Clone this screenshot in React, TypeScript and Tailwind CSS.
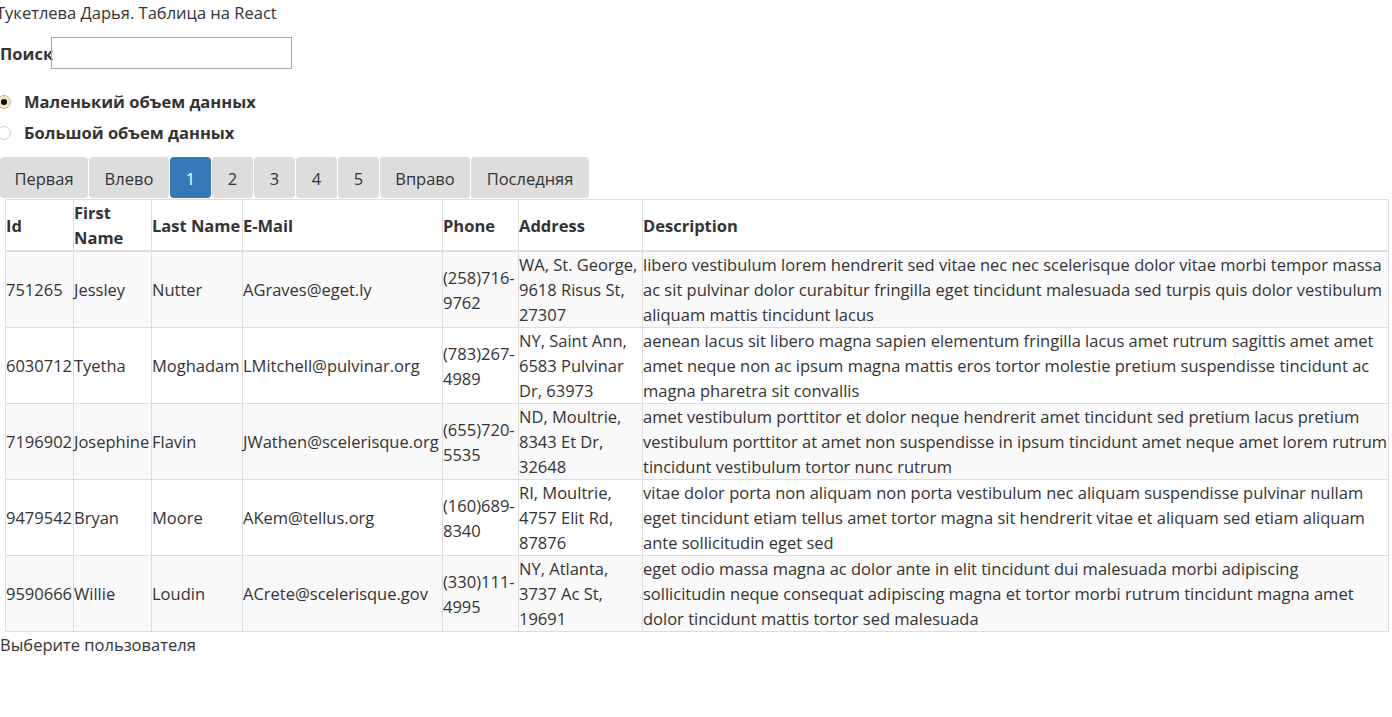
import React from "react";

type RowT = {
  id: string;
  first: string;
  last: string;
  email: string;
  phone: string;
  address: string;
  description: string[];
};

// строки описания разбиты так же, как в макете
const rows: RowT[] = [
  {
    id: "751265",
    first: "Jessley",
    last: "Nutter",
    email: "AGraves@eget.ly",
    phone: "(258)716-9762",
    address: "WA, St. George, 9618 Risus St, 27307",
    description: [
      "libero vestibulum lorem hendrerit sed vitae nec nec scelerisque dolor vitae morbi tempor massa",
      "ac sit pulvinar dolor curabitur fringilla eget tincidunt malesuada sed turpis quis dolor vestibulum",
      "aliquam mattis tincidunt lacus",
    ],
  },
  {
    id: "6030712",
    first: "Tyetha",
    last: "Moghadam",
    email: "LMitchell@pulvinar.org",
    phone: "(783)267-4989",
    address: "NY, Saint Ann, 6583 Pulvinar Dr, 63973",
    description: [
      "aenean lacus sit libero magna sapien elementum fringilla lacus amet rutrum sagittis amet amet",
      "amet neque non ac ipsum magna mattis eros tortor molestie pretium suspendisse tincidunt ac",
      "magna pharetra sit convallis",
    ],
  },
  {
    id: "7196902",
    first: "Josephine",
    last: "Flavin",
    email: "JWathen@scelerisque.org",
    phone: "(655)720-5535",
    address: "ND, Moultrie, 8343 Et Dr, 32648",
    description: [
      "amet vestibulum porttitor et dolor neque hendrerit amet tincidunt sed pretium lacus pretium",
      "vestibulum porttitor at amet non suspendisse in ipsum tincidunt amet neque amet lorem rutrum",
      "tincidunt vestibulum tortor nunc rutrum",
    ],
  },
  {
    id: "9479542",
    first: "Bryan",
    last: "Moore",
    email: "AKem@tellus.org",
    phone: "(160)689-8340",
    address: "RI, Moultrie, 4757 Elit Rd, 87876",
    description: [
      "vitae dolor porta non aliquam non porta vestibulum nec aliquam suspendisse pulvinar nullam",
      "eget tincidunt etiam tellus amet tortor magna sit hendrerit vitae et aliquam sed etiam aliquam",
      "ante sollicitudin eget sed",
    ],
  },
  {
    id: "9590666",
    first: "Willie",
    last: "Loudin",
    email: "ACrete@scelerisque.gov",
    phone: "(330)111-4995",
    address: "NY, Atlanta, 3737 Ac St, 19691",
    description: [
      "eget odio massa magna ac dolor ante in elit tincidunt dui malesuada morbi adipiscing",
      "sollicitudin neque consequat adipiscing magna et tortor morbi rutrum tincidunt magna amet",
      "dolor tincidunt mattis tortor sed malesuada",
    ],
  },
];

const pages = [
  { label: "Первая", w: "w-[88px]" },
  { label: "Влево", w: "w-[80px]" },
  { label: "1", w: "w-[41px]", active: true },
  { label: "2", w: "w-[41px]" },
  { label: "3", w: "w-[41px]" },
  { label: "4", w: "w-[41px]" },
  { label: "5", w: "w-[41px]" },
  { label: "Вправо", w: "w-[90px]" },
  { label: "Последняя", w: "w-[118px]" },
];

const Radio = ({ checked, label }: { checked?: boolean; label: string }) => (
  <label className="flex items-center h-[31px] font-bold">
    <span
      className={`-ml-[3px] mr-[13px] w-[14px] h-[14px] rounded-full border flex items-center justify-center ${
        checked ? "border-[#c9b68f] bg-[#f3e6c6]" : "border-[#d0d0d0] bg-white"
      }`}
    >
      {checked && <span className="w-[6px] h-[6px] rounded-full bg-black" />}
    </span>
    {label}
  </label>
);

export default function App() {
  return (
    <div
      className="text-[16.5px] leading-[25px] text-[#333] bg-white min-h-screen overflow-hidden"
      style={{ fontFamily: "'Open Sans', sans-serif" }}
    >
      {/* Заголовок */}
      <div className="-ml-[4px] h-[25px]">Тукетлева Дарья. Таблица на React</div>

      {/* Поиск */}
      <div className="flex items-center mt-[12px]">
        <span className="font-bold w-[51px] whitespace-nowrap">Поиск</span>
        <input className="w-[241px] h-[32px] border border-[#a9a9a9] outline-none" />
      </div>

      {/* Объем данных */}
      <div className="mt-[17px] flex flex-col">
        <Radio checked label="Маленький объем данных" />
        <Radio label="Большой объем данных" />
      </div>

      {/* Пагинация */}
      <div className="flex gap-px mt-[9px]">
        {pages.map((p) => (
          <button
            key={p.label}
            className={`${p.w} h-[41px] rounded-[4px] text-center pt-px ${
              p.active ? "bg-[#337ab7] text-white" : "bg-[#dddddd] text-[#333]"
            }`}
          >
            {p.label}
          </button>
        ))}
      </div>

      {/* Таблица */}
      <table className="ml-[5px] mt-px table-fixed border-collapse w-[1383px]">
        <colgroup>
          <col className="w-[68px]" />
          <col className="w-[78px]" />
          <col className="w-[91px]" />
          <col className="w-[200px]" />
          <col className="w-[76px]" />
          <col className="w-[124px]" />
          <col className="w-[746px]" />
        </colgroup>
        <thead>
          <tr className="font-bold text-left">
            {["Id", "First Name", "Last Name", "E-Mail", "Phone", "Address", "Description"].map((h) => (
              <th
                key={h}
                className="border border-[#ddd] border-b-2 h-[50px] p-0 align-middle text-left font-bold"
              >
                {h}
              </th>
            ))}
          </tr>
        </thead>
        <tbody>
          {rows.map((r, i) => (
            <tr key={r.id} className={i % 2 === 0 ? "bg-[#f9f9f9]" : "bg-white"}>
              {[r.id, r.first, r.last, r.email, r.phone, r.address].map((c, j) => (
                <td key={j} className="border border-[#ddd] h-[75px] p-0 align-middle">
                  {c}
                </td>
              ))}
              <td className="border border-[#ddd] h-[75px] p-0 align-middle">
                {r.description.map((line) => (
                  <div key={line} className="whitespace-nowrap">
                    {line}
                  </div>
                ))}
              </td>
            </tr>
          ))}
        </tbody>
      </table>

      <div>Выберите пользователя</div>
    </div>
  );
}
